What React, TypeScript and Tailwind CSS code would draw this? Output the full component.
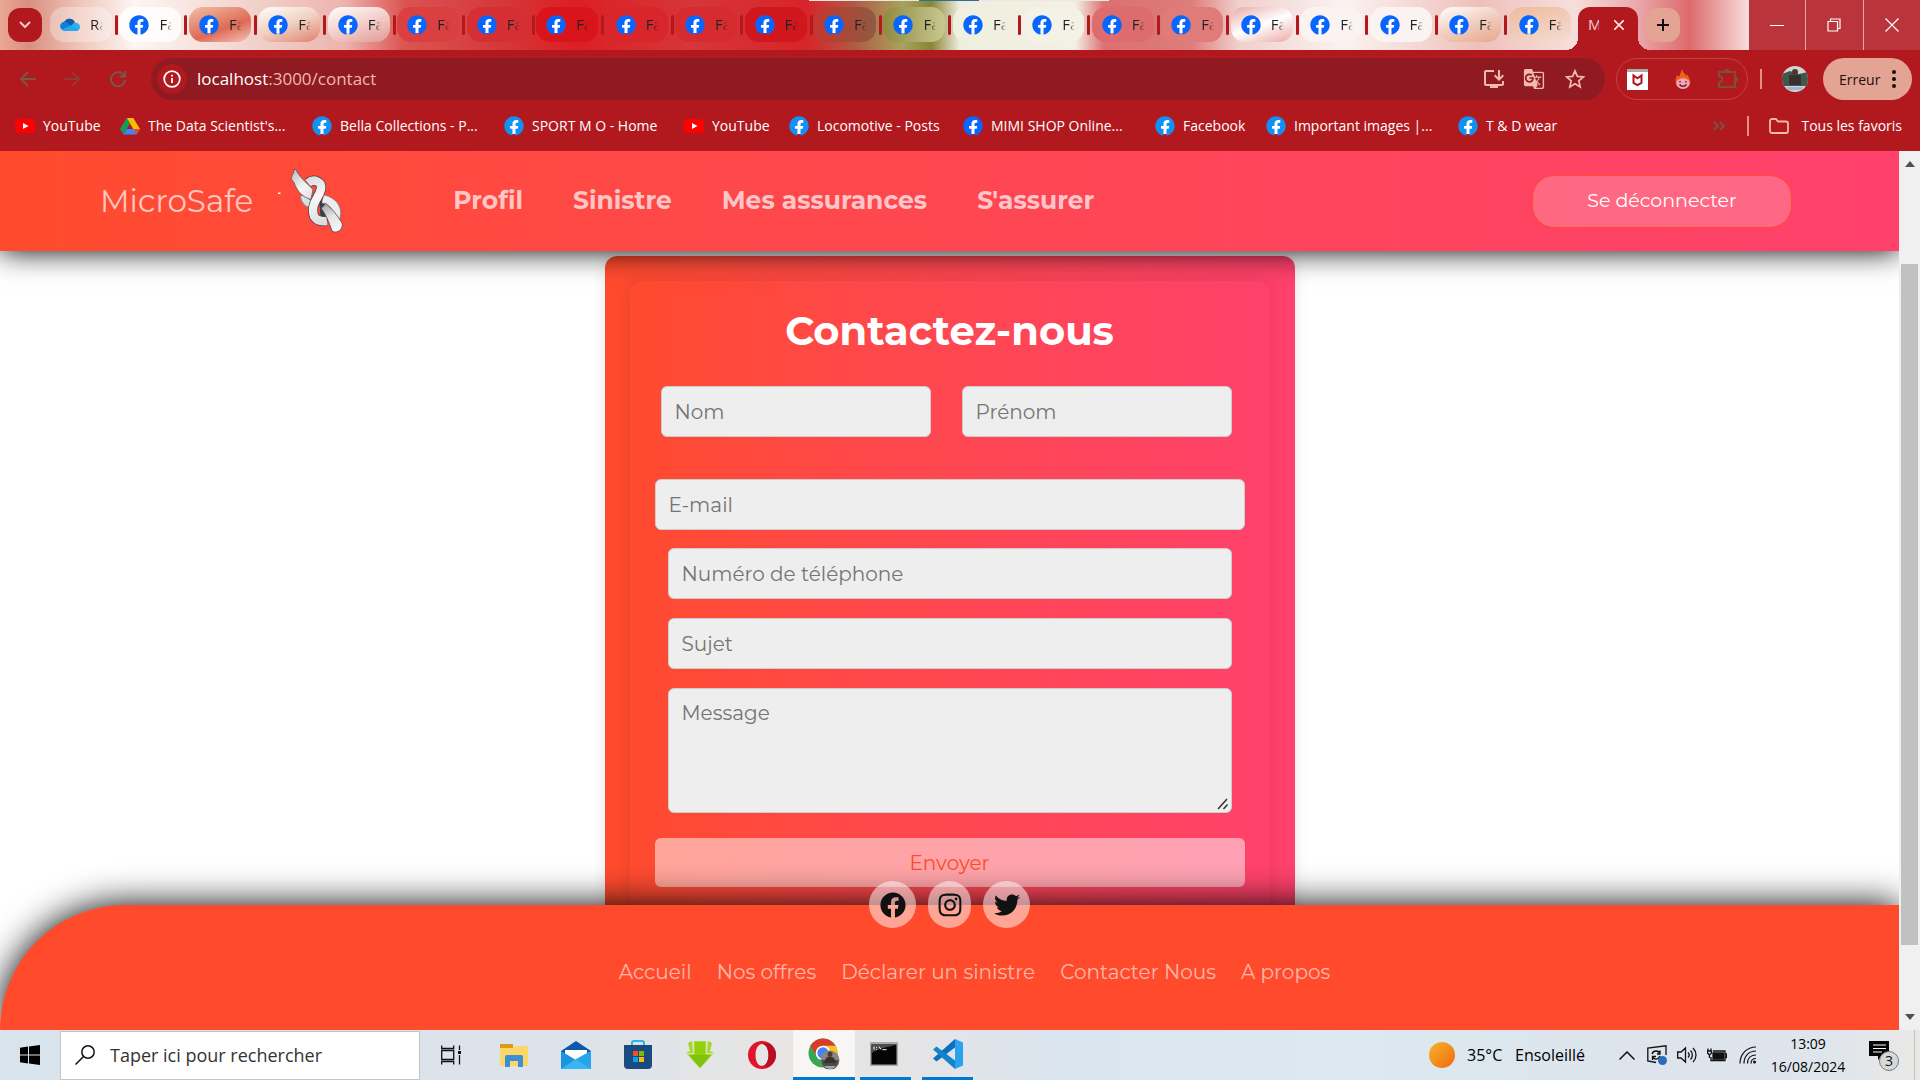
import React from "react";
import { FaFacebook, FaInstagram, FaTwitter } from "react-icons/fa";
import { MdGTranslate, MdOutlineInstallDesktop } from "react-icons/md";

const tabs = [
  "bg-white/30", "bg-white/80", "bg-[linear-gradient(160deg,#f0c0a8,#df6a55_60%,#f3c4ba)]", "bg-[linear-gradient(160deg,#fff,#f0d0c0_50%,#e0806e)]", "bg-[linear-gradient(160deg,#fff,#f0c5bf_60%,#e09a94)]", "bg-[#d9403f]",
  "bg-[#d52f33]", "bg-[#da141b]", "bg-[#d8262c]", "bg-[#d62b2f]", "bg-[#cf171d]", "bg-[linear-gradient(90deg,#c4372f,#8f5a42)]",
  "bg-[linear-gradient(90deg,#8f8a40,#c9c890)]", "bg-[#eff0e0]", "bg-[#f4f2e6]", "bg-[#dc6c6e]", "bg-[#df7b79]", "bg-[linear-gradient(160deg,#e9a9a5,#fff_50%,#e9a9a5)]",
  "bg-[#fbf3f2]", "bg-[#faf3f2]", "bg-[linear-gradient(160deg,#fff,#f0cdc0_50%,#e9a68c)]", "bg-[linear-gradient(160deg,#eebb9d,#f4dcd2)]",
];

type Mark = { kind: "yt" | "drive" | "fb" | "fb2"; label: string; width: string };
const bookmarks: Mark[] = [
  { kind: "yt", label: "YouTube", width: "w-[105px]" },
  { kind: "drive", label: "The Data Scientist's...", width: "w-48" },
  { kind: "fb", label: "Bella Collections - P...", width: "w-48" },
  { kind: "fb", label: "SPORT M O - Home", width: "w-[180px]" },
  { kind: "yt", label: "YouTube", width: "w-[105px]" },
  { kind: "fb", label: "Locomotive - Posts", width: "w-[174px]" },
  { kind: "fb2", label: "MIMI SHOP Online...", width: "w-48" },
  { kind: "fb", label: "Facebook", width: "w-[111px]" },
  { kind: "fb", label: "Important images |...", width: "w-48" },
  { kind: "fb", label: "T & D wear", width: "w-[111px]" },
];

function Facebook({ color = "text-[#0866ff]" }: { color?: string }) {
  return (
    <span className="flex size-5 shrink-0 items-center justify-center rounded-full bg-[radial-gradient(circle,white_55%,transparent_60%)]">
      <FaFacebook className={`size-5 ${color}`} />
    </span>
  );
}

function MarkIcon({ kind }: { kind: Mark["kind"] }) {
  if (kind === "yt")
    return (
      <svg viewBox="0 0 20 20" className="size-5 shrink-0">
        <rect x="0" y="3" width="20" height="14" rx="4" fill="#f00" />
        <path d="M8 7l5.500 3L8 13z" fill="#fff" />
      </svg>
    );
  if (kind === "drive")
    return (
      <svg viewBox="0 0 20 18" className="size-5 shrink-0">
        <path d="M6.700 1h6.600L20 12h-6.700z" fill="#fbbc04" />
        <path d="M6.700 1L10 6.400 3.400 17.400 0 12z" fill="#0f9d58" />
        <path d="M6.800 12H20l-3.400 5.400H3.400z" fill="#4285f4" />
        <path d="M16.600 17.400L20 12h-6.700z" fill="#ea4335" />
      </svg>
    );
  return <Facebook color={kind === "fb" ? "text-[#1390f3]" : "text-[#0866ff]"} />;
}

function OneDrive() {
  return (
    <svg viewBox="0 0 20 14" className="size-5 shrink-0">
      <path d="M5 12a4.500 4.500 0 01-.6-8.600A6 6 0 0115 4.300l-4 5z" fill="#0a5fb4" />
      <path d="M5 13a5 5 0 01-4.600-6.600C2 3.500 5 3.200 7 4.500l9 7z" fill="#1280d6" />
      <path d="M8 13l5-7.500c3-2 7-.2 7 3.500 0 2.300-1.700 4-4 4z" fill="#29b0ee" />
      <path d="M2 11.500L11 7.500l7.500 4c-.7 1-1.500 1.500-2.500 1.500H5c-1.200 0-2.300-.6-3-1.500z" fill="#28a8ea" />
    </svg>
  );
}

function TabStrip() {
  return (
    <div className="relative flex h-[50px] bg-[linear-gradient(90deg,#eba894_0%,#d98f80_1.500%,#eec3b6_4%,#fdf6f4_7%,#f2d3cb_13%,#ecb3ae_18%,#db5552_21%,#d5383c_26%,#dc1f24_30%,#d6363a_36%,#d8242a_42%,#b05a45_44.500%,#a7a35c_47%,#8a8535_48.500%,#efeede_50%,#f4f0e4_56%,#dc7072_57.500%,#dd7c7b_62%,#f1cfcc_64.500%,#fbf3f1_70%,#efc0bb_77%,#f7dedb_82%,#ebaeb0_85%,#dd6a6c_88%,#f6dcd8_91%)]">
      <span className="absolute left-[809px] top-0 flex h-px w-[300px] justify-center bg-[#ece6e4]"><span className="mr-5 h-px w-[60px] bg-[#2b6fa0]" /></span>
      <button aria-label="Rechercher dans les onglets" className="ml-2 mt-2 flex h-[34px] w-[34px] items-center justify-center rounded-xl bg-[#b1191f]">
        <svg viewBox="0 0 12 8" className="h-2 w-3" fill="none" stroke="#f6c9bf" strokeWidth="2"><path d="M1 1l5 5 5-5" /></svg>
      </button>
      <div className="ml-2 mt-[7px] flex h-[43px] flex-1">
        {tabs.map((bg, i) => (
          <div key={i} className="flex h-[35px] min-w-0 flex-1 items-center">
            <button className={`flex h-[35px] w-[62px] items-center rounded-[14px] pl-[10px] ${bg}`}>
              {i === 0 ? <OneDrive /> : <Facebook />}
              <span className="ml-[10px] w-[13px] overflow-hidden whitespace-nowrap bg-gradient-to-r from-[#222] from-50% to-transparent bg-clip-text text-left text-[15px] text-transparent">
                {i === 0 ? "Ra" : "Fa"}
              </span>
            </button>
            {i < tabs.length - 1 && <span className="ml-[3px] h-5 w-[3px] shrink-0 rounded bg-[#b1191f]" />}
          </div>
        ))}
        <div className="relative flex h-[43px] w-[60px] shrink-0 items-center rounded-t-xl bg-[#b1191f] pb-2 text-[#f7cfc8]">
          <span className="absolute -left-3 bottom-0 size-3 bg-[radial-gradient(circle_at_0_0,transparent_12px,#b1191f_12px)]" />
          <span className="absolute -right-3 bottom-0 size-3 bg-[radial-gradient(circle_at_100%_0,transparent_12px,#b1191f_12px)]" />
          <span className="ml-[10px] w-[11px] overflow-hidden whitespace-nowrap text-[15px]">M</span>
          <button aria-label="Fermer l'onglet" className="ml-[15px]">
            <svg viewBox="0 0 10 10" className="size-[10px]" stroke="#ffe4df" strokeWidth="1.600"><path d="M0 0l10 10M10 0L0 10" /></svg>
          </button>
        </div>
      </div>
      <button aria-label="Nouvel onglet" className="ml-2 mt-2 flex size-[34px] items-center justify-center rounded-xl bg-[#e3a493]">
        <svg viewBox="0 0 12 12" className="size-3" stroke="#111" strokeWidth="2"><path d="M6 0v12M0 6h12" /></svg>
      </button>
      <div className="ml-[69px] flex w-[171px] divide-x divide-[#e8a7a2] bg-[#b9343b] text-white">
        <button aria-label="Réduire" className="flex flex-1 items-center justify-center"><svg viewBox="0 0 14 14" className="size-[14px]" stroke="currentColor"><path d="M0 7.500h14" /></svg></button>
        <button aria-label="Restaurer" className="flex flex-1 items-center justify-center"><svg viewBox="0 0 14 14" className="size-[14px]" stroke="currentColor" fill="none" strokeWidth="1.200"><path d="M1 3.500h9.500V13H1zM3.500 3.500V1H13v9.500h-2.500" /></svg></button>
        <button aria-label="Fermer" className="flex flex-1 items-center justify-center"><svg viewBox="0 0 14 14" className="size-[14px]" stroke="currentColor" strokeWidth="1.200"><path d="M.5.5l13 13M13.500.5l-13 13" /></svg></button>
      </div>
    </div>
  );
}

function Toolbar() {
  return (
    <div className="flex h-[50px] items-center pt-2 pr-2">
      <button aria-label="Précédent" className="ml-[18px]"><svg viewBox="0 0 20 20" className="size-5" fill="none" stroke="#7a5648" strokeWidth="2"><path d="M18 10H3M10 3l-7 7 7 7" /></svg></button>
      <button aria-label="Suivant" className="ml-6"><svg viewBox="0 0 20 20" className="size-5" fill="none" stroke="#943a33" strokeWidth="2"><path d="M2 10h15M10 3l7 7-7 7" /></svg></button>
      <button aria-label="Actualiser" className="ml-[26px]"><svg viewBox="0 0 20 20" className="size-5" fill="none" stroke="#7a5648" strokeWidth="2"><path d="M16 6.500A7 7 0 1017 11M17 2v5.500h-5.500" /></svg></button>
      <div className="ml-[23px] flex h-[42px] flex-1 items-center rounded-full bg-[#8f1a21] pl-[6px] pr-5 text-[#f2b9ad]">
        <span className="flex size-[30px] items-center justify-center rounded-full bg-[#b1191f]">
          <svg viewBox="0 0 18 18" className="size-[18px]" fill="none" stroke="#fff" strokeWidth="1.800"><circle cx="9" cy="9" r="7.800" /><path d="M9 8v5M9 4.800v1.800" /></svg>
        </span>
        <span className="ml-[10px] flex-1 text-[17px]"><span className="text-white">localhost</span>:3000/contact</span>
        <MdOutlineInstallDesktop className="size-6" />
        <MdGTranslate className="ml-[17px] size-[22px]" />
        <svg viewBox="0 0 20 20" className="ml-5 size-5" fill="none" stroke="currentColor" strokeWidth="1.700"><path d="M10 1.800l2.400 5.600 6 .5-4.600 4 1.400 6L10 14.700 4.800 17.900l1.400-6-4.600-4 6-.5z" /></svg>
      </div>
      <div className="ml-[11px] flex h-[42px] w-[132px] items-center rounded-full border border-[#c83d41] pl-[10px]">
        <svg viewBox="0 0 21 21" className="size-[21px]"><path fill="#fff" d="M0 0h21v21H0z" /><path fill="#aaa" d="M0 0h21v3H0z" /><path d="M6.500 6.500v7.500l4 2.200 4-2.200V6.500l-4 2.800z" fill="none" stroke="#b3121b" strokeWidth="2" /></svg>
        <svg viewBox="0 0 16 20" className="ml-[27px] h-5 w-4"><path d="M7 0c1 4 3 4 4 7l1-2c2 4 4 6 3 10-2 5-12 6-14 0-1-4 0-6 1-9l2 2C5 5 6 3 7 0z" fill="#f0621c" /><path d="M1.500 13c2-5 11-5 13 0 1 4-3 7-6.500 7s-7.500-3-6.500-7z" fill="#f3a5b5" /><path d="M5 12v1.500M11 12v1.500M4.500 15.500c2 2.500 5 2.500 7 0" fill="none" stroke="#4a1620" strokeWidth="1.300" /></svg>
        <svg viewBox="0 0 22 22" className="ml-[26px] size-[22px]" fill="none" stroke="#78503c" strokeWidth="2"><path d="M2 4h16v15H2v-4.500c4.500 0 4.500-6 0-6z" /><path d="M7 4a3 3 0 016 0zM18 8.500a3 3 0 010 6z" fill="#78503c" stroke="none" /></svg>
      </div>
      <span className="ml-[12px] h-5 w-[2px] bg-[#e8907f]" />
      <svg viewBox="0 0 26 26" className="ml-5 size-[26px] rounded-full"><path fill="#cfd6d8" d="M0 0h26v26H0z" /><path fill="#45554c" d="M0 8l8-3 9 3 9-2v14H0z" /><circle cx="13" cy="6" r="3" fill="#51382f" /><path fill="#35312f" d="M7 9h12v10H7z" /><path fill="#9cb9d4" d="M5 21h16v3H5z" /></svg>
      <button className="ml-[15px] flex h-[42px] w-[89px] items-center rounded-full bg-[#e3a493] pl-4 text-[14px] text-[#25100e]">
        Erreur
        <svg viewBox="0 0 4 20" className="ml-3 h-5 w-1 shrink-0" fill="#111"><circle cx="2" cy="3" r="2" /><circle cx="2" cy="10" r="2" /><circle cx="2" cy="17" r="2" /></svg>
      </button>
    </div>
  );
}

function Bookmarks() {
  return (
    <div className="flex h-[51px] items-center pl-[15px] pr-[18px] text-[14px] text-white">
      {bookmarks.map((b, i) => (
        <a key={i} href="#" className={`flex shrink-0 items-center gap-2 whitespace-nowrap ${b.width}`}>
          <MarkIcon kind={b.kind} />
          {b.label}
        </a>
      ))}
      <svg viewBox="0 0 12 10" className="ml-auto h-[10px] w-3" fill="none" stroke="#7a5648" strokeWidth="1.800"><path d="M1 1l4 4-4 4M7 1l4 4-4 4" /></svg>
      <span className="ml-[22px] h-5 w-[2px] bg-[#e8907f]" />
      <a href="#" className="ml-5 flex items-center gap-3 whitespace-nowrap">
        <svg viewBox="0 0 20 16" className="h-4 w-5" fill="none" stroke="#f2b9ad" strokeWidth="1.800"><path d="M1 3a2 2 0 012-2h4l2 2.500h8a2 2 0 012 2V13a2 2 0 01-2 2H3a2 2 0 01-2-2z" /></svg>
        Tous les favoris
      </a>
    </div>
  );
}

function Knot() {
  return (
    <svg viewBox="8 13 66 66" className="ml-6 h-[66px] w-[66px]" fill="none">
      <defs>
        <linearGradient id="tip" gradientUnits="userSpaceOnUse" x1="24" y1="16" x2="44" y2="42"><stop offset="0" stopColor="#c2c2c2" /><stop offset=".6" stopColor="#f6f6f6" /><stop offset="1" stopColor="#dedede" /></linearGradient>
        <linearGradient id="bend" gradientUnits="userSpaceOnUse" x1="38" y1="24" x2="56" y2="70"><stop offset="0" stopColor="#dcdcdc" /><stop offset=".4" stopColor="#f8f8f8" /><stop offset="1" stopColor="#dadada" /></linearGradient>
        <linearGradient id="tail" gradientUnits="userSpaceOnUse" x1="52" y1="48" x2="68" y2="78"><stop offset="0" stopColor="#9a9a9a" /><stop offset=".5" stopColor="#e4e4e4" /><stop offset="1" stopColor="#fafafa" /></linearGradient>
      </defs>
      <path d="M9 37.500h2.500v1.500H9z" fill="#fff" />
      <path d="M50 44l14 8 1 13-13 2z" fill="#3c3c46" />
      <path d="M35 41c1 6 4 8 9 8" stroke="#8a8a92" strokeWidth="8" />
      <path d="M35 41c1 6 4 8 9 8" stroke="#dedede" strokeWidth="6.500" />
      <path d="M54 44c12 3 16 11 12 21" stroke="#7c7c84" strokeWidth="9" />
      <path d="M54 44c12 3 16 11 12 21" stroke="#ececec" strokeWidth="7.500" />
      <path d="M27 14.500c3 7 8 11 17 20l-2 10c-10-3-14-9-17-17-1.500-2-3-3-2.500-5 .5-3 3-5 2.500-8z" fill="url(#tip)" stroke="#55555d" strokeWidth=".8" />
      <path d="M39 28c6-5 15-1 13 6-2 9-8 12-8 21 0 9 5 12 14 11" stroke="#3e3e48" strokeWidth="10" />
      <path d="M39 28c6-5 15-1 13 6-2 9-8 12-8 21 0 9 5 12 14 11" stroke="url(#bend)" strokeWidth="8.500" />
      <path d="M52 53c2-1 4-3 4-5 7 5 12 12 17 20 1 2 0 4-1 6-2 3-6 4-9 2-3-9-6-16-11-23z" fill="url(#tail)" stroke="#4a4a54" strokeWidth=".8" />
    </svg>
  );
}

const field = "h-[51px] rounded-md border border-[#ccc] bg-[#eee] px-[13px] text-[20px] text-[#333] placeholder:text-[#757575]";

function ContactForm() {
  return (
    <div className="mx-auto mt-[5px] h-[840px] w-[690px] rounded-xl bg-linear-to-r from-[#ff4b2b] to-[#ff416c] p-[25px] shadow-[0_0_14px_rgba(0,0,0,0.1)]">
      <form className="flex flex-col rounded-xl px-[25px] pt-7 pb-6 shadow-[0_0_14px_rgba(0,0,0,0.1)]" onSubmit={(e) => e.preventDefault()}>
        <h1 className="text-center text-[40px] leading-[44px] font-bold text-white">Contactez-nous</h1>
        <div className="mt-[33px] flex gap-[31px] pl-[6px] pr-[13px]">
          <input aria-label="Nom" placeholder="Nom" className={`min-w-0 flex-1 ${field}`} />
          <input aria-label="Prénom" placeholder="Prénom" className={`min-w-0 flex-1 ${field}`} />
        </div>
        <input type="email" aria-label="E-mail" placeholder="E-mail" className={`mt-[42px] ${field}`} />
        <div className="mt-[18px] flex flex-col gap-[19px] px-[13px]">
          <input type="tel" aria-label="Numéro de téléphone" placeholder="Numéro de téléphone" className={field} />
          <input aria-label="Sujet" placeholder="Sujet" className={field} />
          <div className="relative flex">
            <textarea aria-label="Message" placeholder="Message" className="h-[125px] flex-1 resize rounded-md border border-[#ccc] bg-[#eee] px-[13px] py-[10px] text-[20px] leading-7 text-[#333] placeholder:text-[#757575]" />
            <svg viewBox="0 0 16 16" className="pointer-events-none absolute right-[2px] bottom-[2px] size-4" fill="none" stroke="#333" strokeWidth="1.500"><path d="M0 0h16v16H0z" fill="#eee" stroke="none" /><path d="M4 14L13 4M9.500 14l4-4.500" /></svg>
          </div>
        </div>
        <button className="mt-[25px] h-[49px] rounded-md bg-white/50 text-[20px] text-[#ff4b2b]">Envoyer</button>
      </form>
    </div>
  );
}

const social = "flex h-[47px] w-[47px] items-center justify-center rounded-full bg-white/50";

function Page() {
  return (
    <div className="flex min-w-0 flex-1 flex-col overflow-hidden bg-white font-['Montserrat','Inter',sans-serif]">
      <header className="relative z-10 flex h-[100px] shrink-0 items-center bg-linear-to-r from-[#ff4b2b] to-[#ff416c] pl-[100px] pr-[107px] shadow-[0_0_28px_#000]">
        <a href="#" className="flex items-center text-[31px] text-white/70">MicroSafe<Knot /></a>
        <nav className="ml-[110px] flex gap-[50px] text-[25px] font-bold text-white/70">
          <a href="#">Profil</a><a href="#">Sinistre</a><a href="#">Mes assurances</a><a href="#">S'assurer</a>
        </nav>
        <button className="ml-auto h-[53px] w-[260px] rounded-[22px] border border-[#ff4b2b] bg-white/20 text-[19px] text-white">Se déconnecter</button>
      </header>
      <main className="min-h-0 flex-1">
        <ContactForm />
      </main>
      <footer className="relative z-10 flex h-[125px] shrink-0 flex-col items-center rounded-tl-[141px] bg-[#ff4b2b] text-[20px] text-white/60 shadow-[0_0_36px_#000]">
        <div className="-mt-6 flex shrink-0 gap-3 text-[#111]">
          <a href="#" aria-label="Facebook" className={social}><FaFacebook className="size-[26px]" /></a>
          <a href="#" aria-label="Instagram" className="flex h-[47px] w-[43px] items-center justify-center rounded-full bg-white/50"><FaInstagram className="size-[26px]" /></a>
          <a href="#" aria-label="Twitter" className={social}><FaTwitter className="size-[26px]" /></a>
        </div>
        <nav className="mt-[29px] flex shrink-0 gap-[25px] pl-[50px]">
          <a href="#">Accueil</a><a href="#">Nos offres</a><a href="#">Déclarer un sinistre</a><a href="#">Contacter Nous</a><a href="#">A propos</a>
        </nav>
        <p className="mt-9 shrink-0 text-white">Copyright 2024</p>
      </footer>
    </div>
  );
}

function Scrollbar() {
  return (
    <div className="flex w-[21px] shrink-0 flex-col items-center bg-[#f0f0f0] py-[10px]">
      <svg viewBox="0 0 10 6" className="h-[6px] w-[10px]" fill="#505050"><path d="M5 0l5 6H0z" /></svg>
      <div className="mt-[97px] mb-[69px] w-[17px] flex-1 bg-[#c1c1c1]" />
      <svg viewBox="0 0 10 6" className="h-[6px] w-[10px]" fill="#505050"><path d="M0 0h10L5 6z" /></svg>
    </div>
  );
}

const cell = "flex h-full w-[62px] items-center justify-center";

function Taskbar() {
  return (
    <div className="flex h-[50px] shrink-0 items-center bg-[linear-gradient(90deg,#d9e3ec,#dde3ea_30%,#e8e6e4_42%,#e4e4e6_48%,#dbe5ef_55%,#dce9f0_70%,#dde4ec_85%,#dfe5ec_95%,#e9e8e6)] text-black">
      <button aria-label="Démarrer" className="flex h-full w-[60px] items-center justify-center">
        <svg viewBox="0 0 20 20" className="size-5"><path d="M0 2.700l8-1.100v8H0zM9 1.500L20 0v9.500H9zM0 10.500h8v8l-8-1.200zM9 10.500h11V20L9 18.500z" /></svg>
      </button>
      <label className="flex h-[49px] w-[360px] items-center border border-[#c4c4c4] bg-white pl-[14px]">
        <svg viewBox="0 0 20 20" className="size-5" fill="none" stroke="#111" strokeWidth="1.500"><circle cx="13" cy="7" r="6.200" /><path d="M8.500 11.500L.5 19.500" /></svg>
        <input placeholder="Taper ici pour rechercher" aria-label="Rechercher" className="ml-[15px] w-[260px] text-[18px] outline-none placeholder:text-[#333]" />
      </label>
      <button aria-label="Affichage des tâches" className={cell}>
        <svg viewBox="0 0 20 20" className="size-5" fill="none" stroke="#111" strokeWidth="1.300"><path d="M.7.500V3.500h12V.5M.7 19.500v-3h12v3M.7 5.500h12v9H.7zM18.500.500v4.500M18.500 10v9.500" /><path d="M17 6h3v3h-3z" fill="#111" stroke="none" /></svg>
      </button>
      <div className="ml-px flex h-full">
      <button aria-label="Explorateur" className={cell}>
        <svg viewBox="0 0 28 26" className="h-[26px] w-7"><path d="M0 2h13v8H0z" fill="#dc9c17" /><path d="M0 6h13l2-2h13v20H0z" fill="#fbd765" /><path d="M5 25V15a2 2 0 012-2h14a2 2 0 012 2v10h-5v-6h-8v6z" fill="#3c8fd4" /></svg>
      </button>
      <button aria-label="Courrier" className={cell}>
        <svg viewBox="0 0 30 28" className="h-7 w-[30px]"><path d="M0 10L15 0l15 10v10H0z" fill="#0d58a8" /><path d="M4 9h22v12H4z" fill="#fff" /><path d="M0 10l15 9 15-9v18H0z" fill="#1e93de" /><path d="M0 28l15-10 15-8v18z" fill="#38b6f1" /><path d="M15 18.500L30 28V10z" fill="#2aa4e8" /></svg>
      </button>
      <button aria-label="Store" className={cell}>
        <svg viewBox="0 0 30 30" className="size-[30px]"><path d="M9 8V3a2 2 0 012-2h8a2 2 0 012 2v5" fill="none" stroke="#2ab4ea" strokeWidth="2" /><path d="M1 5h28v20a4 4 0 01-4 4H5a4 4 0 01-4-4z" fill="#194a80" /><path d="M10 11h5v5h-5z" fill="#f25022" /><path d="M16 11h5v5h-5z" fill="#7fba00" /><path d="M10 17h5v5h-5z" fill="#00a4ef" /><path d="M16 17h5v5h-5z" fill="#ffb900" /></svg>
      </button>
      <button aria-label="Téléchargements" className={cell}>
        <svg viewBox="0 0 28 28" className="size-7"><path d="M2 2l4-2 1 12H0l4-2zM26 2l-4-2-1 12h7l-4-2z" fill="#a6d62e" /><path d="M8 0h12v13h7L14 27 1 13h7z" fill="#93d011" stroke="#c3e86c" /><path d="M3 14h22L14 27z" fill="#7fc40b" /></svg>
      </button>
      <button aria-label="Opera" className={cell}>
        <svg viewBox="0 0 28 28" className="size-7"><path fillRule="evenodd" d="M14 0a14 14 0 100 28 14 14 0 000-28zm0 3c4 0 6.500 5 6.500 11S18 25 14 25s-6.500-5-6.500-11S10 3 14 3z" fill="#e3132c" /><path d="M14 3c9-3 14 5 14 11s-5 14-14 11c4 0 6.500-5 6.500-11S18 3 14 3z" fill="#b80f23" /></svg>
      </button>
      <button aria-label="Chrome" className="flex h-full w-[62px] items-center justify-center border-b-[3px] border-[#0078d4] bg-[#f8f6f4]">
        <svg viewBox="0 0 32 32" className="size-8"><circle cx="15" cy="15" r="14.500" fill="#34a853" /><path d="M2.500 7.700A14.500 14.500 0 0127.500 7.700H15L9 18.500z" fill="#dc3b2c" /><path d="M15 7.700h12.500A14.500 14.500 0 0115 29.500l6.300-11z" fill="#fcc31e" /><circle cx="15" cy="15" r="7.300" fill="#fff" /><circle cx="15" cy="15" r="5.700" fill="#4285f4" /><circle cx="22" cy="22" r="9.500" fill="#8a8580" /><path d="M13.500 22h17c0 4-2 8-5 9h-7c-3-1-5-5-5-9z" fill="#4d4b48" /><path d="M18 20l4-2 4 2 2 5H16z" fill="#3a302c" /><circle cx="22" cy="16" r="2.500" fill="#4a3a33" /><path d="M16 28h12c-3 4-9 4-12 0z" fill="#97a7b3" /></svg>
      </button>
      </div>
      <button aria-label="Invite de commandes" className="ml-[5px] flex h-full w-[51px] items-center justify-center border-b-[3px] border-[#0078d4] pr-[3px]">
        <svg viewBox="0 0 28 24" className="h-6 w-7"><path d="M0 0h28v24H0z" fill="#a9a9a9" /><path d="M1.500 2.500h25v20h-25z" fill="#050505" /><path d="M1.500 2.500h25c-8 3-20 4-25 9z" fill="#4b4b4b" /><path d="M4 4.500v3M6.500 5v.8M6.500 7v.8M9 4.500l2 3M12.500 7.700h4" stroke="#fff" strokeWidth="1" /></svg>
      </button>
      <button aria-label="Visual Studio Code" className="ml-[11px] flex h-full w-[51px] items-center justify-center border-b-[3px] border-[#0078d4]">
        <svg viewBox="0 0 30 30" className="size-[30px]"><path d="M22 0v8.500L3.500 22.500 0 19.500z" fill="#0b70bd" /><path d="M22 30v-8.500L3.500 7.500 0 10.500z" fill="#1285cc" /><path d="M22 0l8 3.500v23L22 30z" fill="#2aa2f0" /></svg>
      </button>
      <div className="ml-auto flex h-full items-center text-[16px]">
        <span className="size-[26px] rounded-full bg-linear-to-br from-[#f3b32c] to-[#f0680d]" />
        <span className="ml-3 w-[48px]">35°C</span>
        <span className="w-[104px]">Ensoleillé</span>
        <svg viewBox="0 0 16 9" className="h-[9px] w-4" fill="none" stroke="#111" strokeWidth="1.500"><path d="M.5 8.500L8 1l7.500 7.500" /></svg>
        <svg viewBox="0 0 20 20" className="ml-3 size-5" fill="none" stroke="#111" strokeWidth="1.300"><path d="M9 17.500L.8 16V3L19 .8V10" /><path d="M5 9c1-4 7-4 8 0M13 5.500V9h-3M13 11c-2 4-6 4-7 1M5.500 15v-3.500H9" /><circle cx="15.500" cy="15.500" r="4.500" fill="#2a6ebb" stroke="none" /></svg>
        <svg viewBox="0 0 20 20" className="ml-[10px] size-5" fill="none" stroke="#111" strokeWidth="1.300"><path d="M.7 7v6H4l4.500 4V3L4 7zM11 7.500c1.500 1.500 1.500 3.500 0 5M13.500 5.500c2.500 2.500 2.500 6.500 0 9M16 3c4 4 4 10 0 14" /></svg>
        <svg viewBox="0 0 20 14" className="ml-[10px] h-[14px] w-5" fill="none" stroke="#111" strokeWidth="1.300"><path d="M6 3h12v9.500H4V9M18 6h1.500v3.500H18" /><path d="M6 5h10.500v6H6z" fill="#111" /><path d="M1 .5v2M4 .5v2M.5 3h4v2l-2 2-2-2zM2.500 7v3" /></svg>
        <svg viewBox="0 0 18 18" className="ml-3 size-[18px]" fill="none" stroke="#111" strokeWidth="1.200"><path d="M1 17.500C1 8 8 1 17 1M5 17.500C5 10 10 5 17 5M8.500 17.500C8.500 12 12 9 17 9M12 17.500c0-3 2-5 5-5" /><circle cx="15.500" cy="16" r="1.500" fill="#111" stroke="none" /></svg>
        <div className="ml-3 w-[78px] text-center text-[14px] leading-[23px]"><div>13:09</div><div>16/08/2024</div></div>
        <svg viewBox="0 0 32 32" className="ml-[22px] size-8"><path d="M0 2h20v15h-7l-4 4v-4H0z" fill="#050505" /><path d="M4 6h13M4 9.500h13M4 13h9" stroke="#fff" strokeWidth="1.200" /><circle cx="20" cy="22" r="9.500" fill="#d6d8da" stroke="#777" /><text x="20" y="27" textAnchor="middle" fontSize="14" fill="#111">3</text></svg>
        <span className="ml-[13px] mr-[5px] h-full w-px bg-[#c2c2c2]" />
      </div>
    </div>
  );
}

export default function App() {
  return (
    <div className="flex h-screen flex-col overflow-hidden bg-white font-['Segoe_UI','Open_Sans',sans-serif]">
      <TabStrip />
      <div className="shrink-0 bg-[#b1191f]">
        <Toolbar />
        <Bookmarks />
      </div>
      <div className="flex min-h-0 flex-1">
        <Page />
        <Scrollbar />
      </div>
      <Taskbar />
    </div>
  );
}
